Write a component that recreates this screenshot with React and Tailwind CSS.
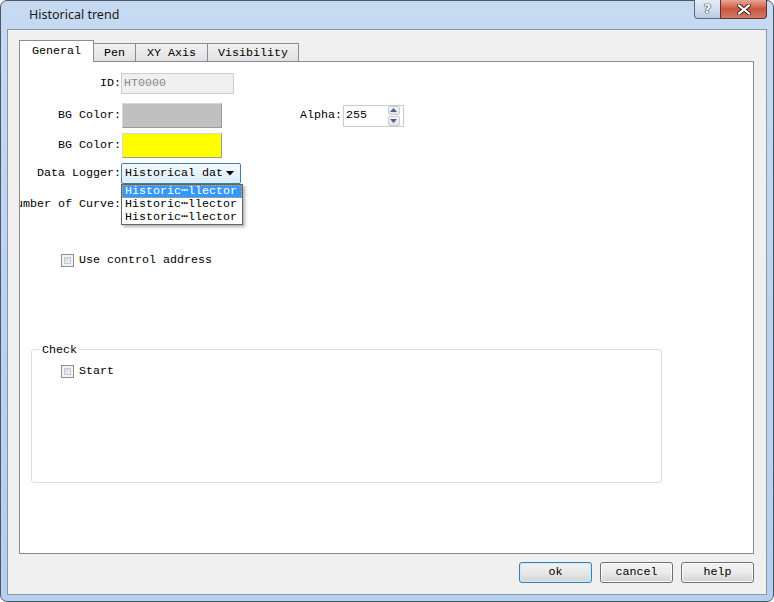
import React from 'react';

const mono = "font-['Liberation_Mono','DejaVu_Sans_Mono',monospace] text-[11.67px] leading-none text-black";

const CheckBox = ({ label }) => (
  <div className="flex items-center h-[13px]">
    <span className="flex w-[13px] h-[13px] shrink-0 border border-[#8e8f8f] bg-[#f4f4f4] p-[2px]">
      <span className="flex-1 border border-[#c5c9ce] bg-linear-to-br from-[#d3d6da] to-[#f4f4f4]" />
    </span>
    <span className="ml-[5px] pt-[1px]">{label}</span>
  </div>
);

const Label = ({ children }) => (
  <div className="flex w-[101px] shrink-0 justify-end whitespace-nowrap pt-[1px]">{children}</div>
);

const DialogButton = ({ children, isDefault }) => (
  <button
    className={`w-[73px] h-[21px] rounded-[3px] border ${
      isDefault
        ? 'border-[#3c7fb1] shadow-[inset_0_0_0_1px_#c8ecfd] bg-linear-to-b from-[#f2f2f2] via-[#e8e8e8] to-[#d5d5d5]'
        : 'border-[#707070] shadow-[inset_0_0_0_1px_#fbfbfb] bg-linear-to-b from-[#f2f2f2] via-[#ebebeb] to-[#d3d3d3]'
    } flex items-center justify-center pt-[1px]`}
  >
    {children}
  </button>
);

const tabs = [
  { name: 'General', w: 'w-[75px]', active: true },
  { name: 'Pen', w: 'w-[43px]' },
  { name: 'XY Axis', w: 'w-[73px]' },
  { name: 'Visibility', w: 'w-[92px]' },
];

export default function App() {
  return (
    <div className="relative w-[774px] h-[602px] overflow-hidden bg-white">
      {/* window frame */}
      <div className="flex flex-col w-[774px] h-[602px] rounded-[7px] border border-[#4a5868] bg-linear-to-b from-[#c6daf2] via-[#bcd3ee] to-[#b6cfec] px-[6px] pb-[6px]">
        {/* title bar */}
        <div className="flex items-center h-[28px] pl-[22px] shrink-0">
          <span className="font-['Noto_Sans',sans-serif] text-[12.5px] text-[#1b1b1b] pt-[1px]">Historical trend</span>
        </div>

        {/* client area */}
        <div className={`flex flex-col flex-1 border border-[#8796a8] bg-[#f0f0f0] ${mono}`}>
          {/* tab strip */}
          <div className="flex items-end h-[21px] mt-[10px] ml-[11px]">
            {tabs.map((t) =>
              t.active ? (
                <div
                  key={t.name}
                  className={`${t.w} h-[22px] -mb-px relative z-10 flex items-center justify-center border border-b-0 border-[#898c95] bg-white pt-[1px]`}
                >
                  {t.name}
                </div>
              ) : (
                <div
                  key={t.name}
                  className={`${t.w} h-[18px] -ml-px flex items-center justify-center border border-b-0 border-[#898c95] bg-linear-to-b from-[#f2f2f2] to-[#e1e1e1] pt-[2px]`}
                >
                  {t.name}
                </div>
              )
            )}
          </div>

          {/* tab page */}
          <div className="flex flex-col flex-1 ml-[11px] mr-[12px] border border-[#898c95] bg-white overflow-hidden">
            {/* ID */}
            <div className="flex items-center h-[21px] mt-[11px]">
              <Label>ID:</Label>
              <div className="flex items-center w-[113px] h-[21px] border border-[#cdcdcd] bg-[#f0f0f0] pl-[2px] pt-[1px] text-[#8a8a8a]">HT0000</div>
            </div>

            {/* BG Color + Alpha */}
            <div className="flex items-center h-[25px] mt-[9px]">
              <Label>BG Color:</Label>
              <div className="w-[100px] h-[25px] ml-[1px] border border-[#9a9a9a] border-t-[#d8d8d8] border-l-[#d8d8d8] bg-[#c0c0c0]" />
              <div className="ml-[78px] pt-[1px]">Alpha:</div>
              <div className="flex items-center w-[61px] h-[22px] ml-[1px] border border-[#c8cbd0] bg-white pl-[2px]">
                <span className="flex-1 pt-[1px]">255</span>
                <div className="flex flex-col w-[12px] h-[20px] mr-[3px] gap-[1px]">
                  <div className="flex flex-1 items-center justify-center rounded-[2px] border border-[#c9cdd3] bg-linear-to-b from-[#f4f4f4] to-[#e2e4e8]">
                    <svg width="7" height="4" viewBox="0 0 7 4"><path d="M0 4 L3.5 0 L7 4 Z" fill="#4d6185" /></svg>
                  </div>
                  <div className="flex flex-1 items-center justify-center rounded-[2px] border border-[#c9cdd3] bg-linear-to-b from-[#f4f4f4] to-[#e2e4e8]">
                    <svg width="7" height="4" viewBox="0 0 7 4"><path d="M0 0 L3.5 4 L7 0 Z" fill="#4d6185" /></svg>
                  </div>
                </div>
              </div>
            </div>

            {/* BG Color 2 */}
            <div className="flex items-center h-[25px] mt-[5px]">
              <Label>BG Color:</Label>
              <div className="w-[100px] h-[25px] ml-[1px] border border-[#9a9a9a] border-t-[#d8d8d8] border-l-[#d8d8d8] bg-[#ffff00]" />
            </div>

            {/* Data Logger */}
            <div className="flex items-center h-[21px] mt-[5px]">
              <Label>Data Logger:</Label>
              <div className="relative z-20">
                <div className="flex items-center w-[120px] h-[21px] rounded-[2px] border border-[#3c7fb1] bg-linear-to-b from-[#f4fafe] to-[#dcedf9] pl-[3px]">
                  <span className="flex-1 whitespace-nowrap pt-[1px]">Historical dat</span>
                  <svg width="8" height="5" viewBox="0 0 8 5" className="mr-[6px]"><path d="M0 0 L8 0 L4 4.5 Z" fill="#000" /></svg>
                </div>
                <div className="absolute left-0 top-[21px] w-[122px] border border-[#646464] bg-white shadow-[2px_2px_3px_rgba(0,0,0,0.3)]">
                  {['Historic\u22EFllector', 'Historic\u22EFllector', 'Historic\u22EFllector'].map((s, i) => (
                    <div
                      key={i}
                      className={`flex items-center h-[13px] overflow-hidden whitespace-nowrap pl-[3px] pt-[1px] ${
                        i === 0 ? 'bg-[#3399ff] text-white outline outline-dotted outline-[#f0a23a] -outline-offset-1' : ''
                      }`}
                    >
                      {s}
                    </div>
                  ))}
                </div>
              </div>
            </div>

            {/* Number of Curve */}
            <div className="flex items-center h-[20px] mt-[10px]">
              <Label>Number of Curve:</Label>
            </div>

            {/* Use control address */}
            <div className="mt-[40px] ml-[41px]">
              <CheckBox label="Use control address" />
            </div>

            {/* Check group */}
            <div className="relative w-[631px] h-[134px] mt-[82px] ml-[11px] rounded-[3px] border border-[#d5dfe5]">
              <span className="absolute -top-[5px] left-[8px] bg-white px-[2px]">Check</span>
              <div className="mt-[15px] ml-[29px]">
                <CheckBox label="Start" />
              </div>
            </div>
          </div>

          {/* buttons */}
          <div className="flex justify-end gap-[8px] h-[21px] mt-[8px] mb-[11px] mr-[12px]">
            <DialogButton isDefault>ok</DialogButton>
            <DialogButton>cancel</DialogButton>
            <DialogButton>help</DialogButton>
          </div>
        </div>
      </div>

      {/* caption buttons */}
      <div className="absolute top-0 right-[7px] flex">
        <div className="flex items-center justify-center w-[27px] h-[19px] rounded-bl-[4px] border border-t-0 border-[#5b6b80] bg-linear-to-b from-[#e4ecf7] via-[#d0def0] to-[#b9cbe4] font-['DejaVu_Sans',sans-serif] text-[13px] font-bold text-white [text-shadow:0_0_1px_#333,0_0_1px_#333,0_0_1px_#333]">
          ?
        </div>
        <div className="flex items-center justify-center w-[47px] h-[19px] -ml-px rounded-br-[4px] border border-t-0 border-[#5b3434] bg-linear-to-b from-[#e8a595] via-[#c9553f] to-[#d47a63]">
          <svg width="14" height="11" viewBox="0 0 14 11">
            <path d="M2 1.5 L12 9.5 M12 1.5 L2 9.5" stroke="#3a2a2a" strokeWidth="4" strokeLinecap="square" />
            <path d="M2 1.5 L12 9.5 M12 1.5 L2 9.5" stroke="#ffffff" strokeWidth="2" strokeLinecap="square" />
          </svg>
        </div>
      </div>
    </div>
  );
}
